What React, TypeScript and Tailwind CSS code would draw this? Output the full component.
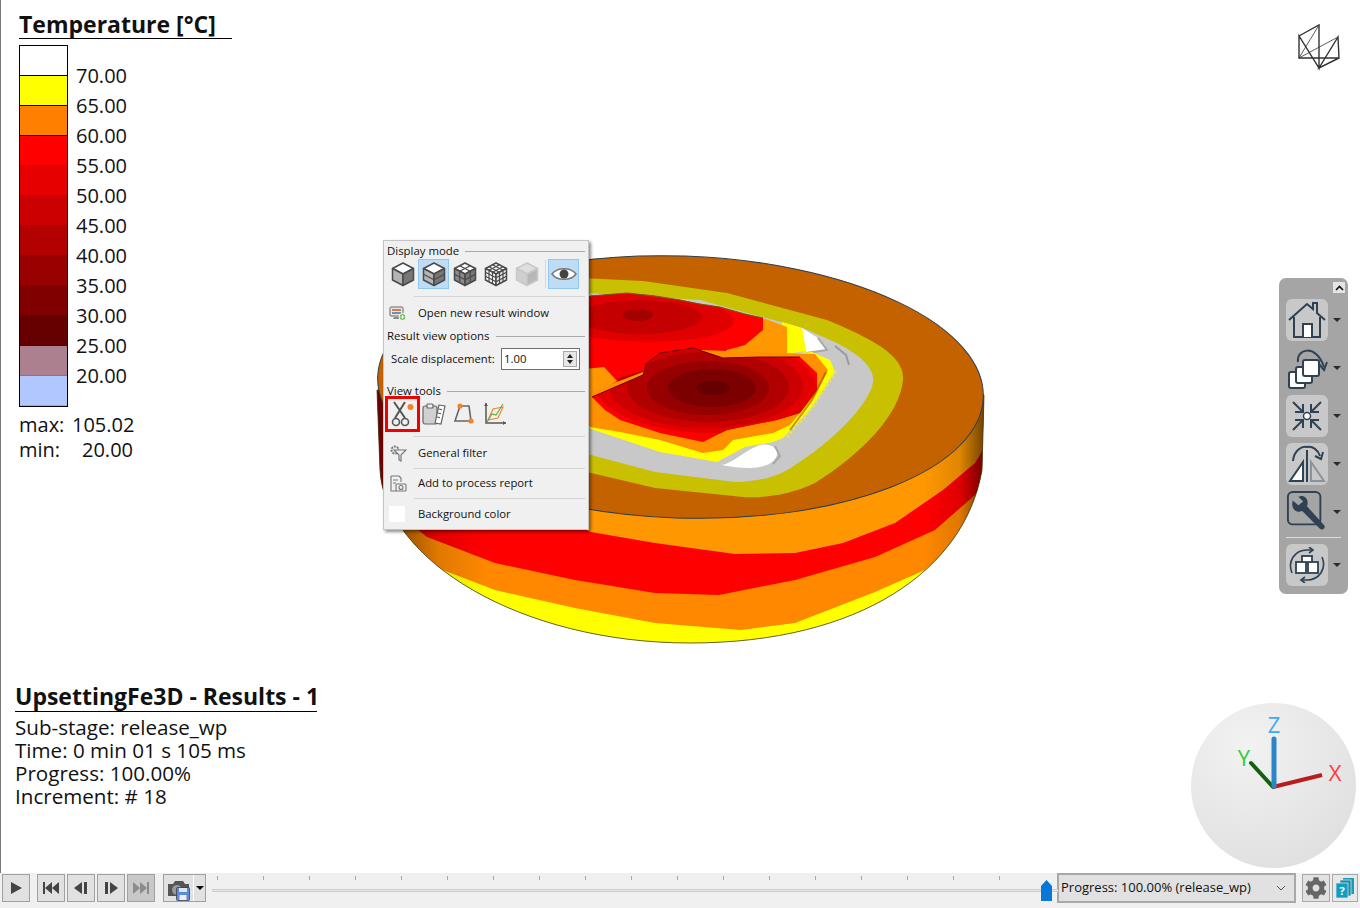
import { FaCog } from 'react-icons/fa';

const bands = ['#ffffff', '#ffff00', '#ff8000', '#ff0000', '#e60000', '#cc0000', '#b30000', '#990000', '#800000', '#660000', '#ad8090', '#b0c8ff'];
const labels = ['70.00', '65.00', '60.00', '55.00', '50.00', '45.00', '40.00', '35.00', '30.00', '25.00', '20.00'];
const ticks = [217, 263, 309, 355, 401, 447, 493, 539, 585, 631, 677, 723, 769, 815, 861, 907, 953, 999];

function Model() {
    const silhouette = 'M377 390 L380 470 C385 560 520 643 690 643 C860 643 965 570 982 470 L984 395 Z';
    return (
        <svg className="absolute left-0 top-0" width="1360" height="873" viewBox="0 0 1360 873">
            <defs>
                <clipPath id="body">
                    <path d={silhouette} />
                </clipPath>
                <clipPath id="front">
                    <path d="M592 397 L605 410 L620 420 L660 433 L703 442 L727 430 L777 420 L800 413 L817 390 L817 373 L800 357 L760 357 L723 358 L693 348 L660 353 L647 363 L643 375 Z" />
                </clipPath>
                <clipPath id="back">
                    <path d="M560 300 L590 296 L627 293 L655 296 L680 300 L700 304 L720 307 L745 314 L763 318 L763 330 L745 345 L727 350 L720 358 L693 348 L660 353 L647 363 L643 375 L625 378 L600 392 L560 400 Z" />
                </clipPath>
                <linearGradient id="side" x1="377" x2="984" y1="0" y2="0" gradientUnits="userSpaceOnUse">
                    <stop offset="0" stopColor="#000" stopOpacity="0.6" />
                    <stop offset="0.1" stopColor="#000" stopOpacity="0.12" />
                    <stop offset="0.18" stopColor="#000" stopOpacity="0" />
                    <stop offset="0.9" stopColor="#000" stopOpacity="0" />
                    <stop offset="0.96" stopColor="#000" stopOpacity="0.12" />
                    <stop offset="1" stopColor="#000" stopOpacity="0.55" />
                </linearGradient>
                <radialGradient id="ball" cx="0.35" cy="0.25" r="0.8">
                    <stop offset="0" stopColor="#f2f2f2" />
                    <stop offset="1" stopColor="#e0e0e0" />
                </radialGradient>
            </defs>

            {/* side of the billet */}
            <g clipPath="url(#body)">
                <rect x="370" y="380" width="620" height="270" fill="#ffff00" />
                <path d="M370 300 L370 500 L395 525 L403 533 L435 567 L495 590 L575 608 L655 623 L741 630 L795 623 L875 592 L925 570 L958 540 L980 500 L995 470 L995 300 Z" fill="#ff8800" />
                <path d="M370 300 L370 490 L400 515 L427 537 L495 563 L575 580 L655 593 L719 595 L795 580 L875 557 L935 530 L975 495 L995 465 L995 300 Z" fill="#ff0000" />
                <path d="M560 300 L560 520 L591 532 L655 543 L735 554 L795 553 L843 543 L895 523 L943 490 L975 463 L995 430 L995 300 Z" fill="#ff9800" />
                <rect x="370" y="380" width="620" height="270" fill="url(#side)" />
            </g>
            <path d={silhouette} fill="none" stroke="#3a3a20" strokeWidth="0.8" />

            {/* top face */}
            <ellipse cx="680.5" cy="387" rx="303" ry="131" transform="rotate(2 680.5 387)" fill="#c46200" stroke="#2c3e50" strokeWidth="1" />
            <path d="M540 276 L643 281 L727 293 L827 320 C870 338 905 355 903 380 C900 415 860 455 815 483 C790 495 765 498 743 497 L655 488 L591 473 L540 460 Z" fill="#c8c000" />
            <path d="M540 290 L700 300 L803 328 L837 343 C860 355 875 368 873 382 C870 405 830 443 795 465 C780 476 760 482 735 482 L655 472 L591 455 L540 440 Z" fill="#c8c8c8" />

            {/* rear bulge */}
            <path d="M802 328 L818 338 L827 350 L806 353 Z" fill="#ffffff" />
            <path d="M782 322 L802 328 L806 351 L786 354 Z" fill="#ffff00" />
            <path d="M763 318 L787 327 L787 354 L720 358 L733 345 L760 333 Z" fill="#ff9800" />
            <path d="M818 338 L827 350 L806 353" fill="none" stroke="#a8a8a8" strokeWidth="2" />
            <path d="M835 346 L846 355 L849 365" fill="none" stroke="#9a9a9a" strokeWidth="2" />
            <g clipPath="url(#back)">
                <rect x="555" y="285" width="220" height="120" fill="#ff0000" />
                <ellipse cx="630" cy="316" rx="104" ry="25" transform="rotate(3 630 316)" fill="#e00000" />
                <ellipse cx="640" cy="317" rx="62" ry="17" fill="#c40000" />
                <ellipse cx="638" cy="315" rx="15" ry="6" fill="#a30000" />
            </g>
            <path d="M590 296 L627 293 L655 296 L680 300 L700 304 L720 307 L745 314 L763 318" fill="none" stroke="#7a5a00" strokeWidth="1" />
            <path d="M575 370 L604 367 L617 381 L600 392 L575 398 Z" fill="#ff9800" />
            <path d="M618 380 L645 372 L647 363" fill="none" stroke="#b00000" strokeWidth="3" />

            {/* front bulge */}
            <path d="M570 410 L588 428 L660 452 L717 462 L745 447 L773 442 L783 438 L810 410 L835 372 L830 360 L812 352 L760 356 L600 392 Z" fill="#ffff00" />
            <path d="M570 400 L590 427 L620 432 L660 440 L703 453 L723 450 L733 440 L773 433 L790 425 L815 395 L828 370 L815 354 L700 350 Z" fill="#ff9000" />
            <path d="M836 371 L812 408 L787 437" fill="none" stroke="#e8e060" strokeWidth="3" strokeDasharray="3 2" />
            <path d="M790 430 L812 400 L826 372" fill="none" stroke="#a05000" strokeWidth="2" opacity="0.6" />
            <path d="M722 465 C735 462 745 450 760 445 C768 443 775 446 777 452 C778 462 765 468 750 468 C740 468 730 467 722 465 Z" fill="#ffffff" />
            <path d="M775 446 L780 456 L773 464" fill="none" stroke="#a8a8a8" strokeWidth="2" />
            <g clipPath="url(#front)">
                <rect x="585" y="340" width="240" height="110" fill="#ff0000" />
                <ellipse cx="705" cy="385" rx="112" ry="48" transform="rotate(2 705 385)" fill="#e40000" />
                <ellipse cx="706" cy="386" rx="97" ry="42" fill="#cc0000" />
                <ellipse cx="708" cy="387" rx="81" ry="35" fill="#b00000" />
                <ellipse cx="708" cy="388" rx="61" ry="27" fill="#960000" />
                <ellipse cx="712" cy="388" rx="44" ry="19" fill="#7d0000" />
                <ellipse cx="713" cy="388" rx="17" ry="7" fill="#660000" />
            </g>
            <path d="M592 397 L643 375 L647 363 L660 353 L693 348 L723 358 L760 357 L800 357" fill="none" stroke="#7a0000" strokeWidth="1" />

            {/* logo */}
            <g fill="none" stroke="#333" strokeWidth="1.4">
                <path d="M1299 36 L1319 25 L1319 68 L1299 36 L1299 58 L1339 58 L1338 37 L1319 68 L1339 58" />
                <path d="M1299 58 L1319 25 M1299 58 L1338 37" strokeWidth="0.8" />
            </g>

            {/* axis ball */}
            <circle cx="1273.5" cy="785.5" r="82.5" fill="url(#ball)" />
            <path d="M1273 787 L1251 763" stroke="#14600f" strokeWidth="4" strokeLinecap="round" />
            <path d="M1273 787 L1322 775" stroke="#b81c1c" strokeWidth="4" />
            <path d="M1274 786 L1274 739" stroke="#2b86c5" strokeWidth="5" strokeLinecap="round" />
            <text x="1274" y="733" textAnchor="middle" fontSize="22" fill="#3fa9f5" fontFamily="'Open Sans', sans-serif">Z</text>
            <text x="1244" y="766" textAnchor="middle" fontSize="22" fill="#2ecc40" fontFamily="'Open Sans', sans-serif">Y</text>
            <text x="1335" y="781" textAnchor="middle" fontSize="22" fill="#ff3b3b" fontFamily="'Open Sans', sans-serif">X</text>
        </svg>
    );
}

function Cube({ h = 0, v = 0, light = false, faded = false }: { h?: number; v?: number; light?: boolean; faded?: boolean }) {
    const line = faded ? '#c8c8c8' : '#4a4a4a';
    const left = faded ? '#cfcfcf' : light ? '#ffffff' : h && v ? '#8a8a8a' : '#b4b4b4';
    const right = faded ? '#b8b8b8' : light ? '#e8e8e8' : '#777777';
    const top = faded ? '#dedede' : '#ffffff';
    const hs = Array.from({ length: h }, (_, i) => (i + 1) / (h + 1));
    const vs = Array.from({ length: v }, (_, i) => (i + 1) / (v + 1));
    return (
        <svg width="24" height="26" viewBox="0 0 24 26" fill="none" stroke={line} strokeWidth="1.5" strokeLinejoin="round">
            <path d="M12 2 L22.5 7.5 L12 13 L1.5 7.5 Z" fill={top} />
            <path d="M1.5 7.5 L12 13 L12 24.5 L1.5 19 Z" fill={left} />
            <path d="M22.5 7.5 L12 13 L12 24.5 L22.5 19 Z" fill={right} />
            {hs.map((t) => (
                <path key={t} d={`M1.5 ${7.5 + 11.5 * t} L12 ${13 + 11.5 * t} L22.5 ${7.5 + 11.5 * t}`} strokeWidth="1.2" />
            ))}
            {vs.map((t) => (
                <path key={t} d={`M${1.5 + 10.5 * t} ${7.5 + 5.5 * t} l0 11.5 M${22.5 - 10.5 * t} ${7.5 + 5.5 * t} l0 11.5 M${1.5 + 10.5 * t} ${7.5 + 5.5 * t} L${12 + 10.5 * t} ${2 + 5.5 * t} M${22.5 - 10.5 * t} ${7.5 + 5.5 * t} L${12 - 10.5 * t} ${2 + 5.5 * t}`} strokeWidth="1.2" />
            ))}
        </svg>
    );
}

function SectionTitle({ title }: { title: string }) {
    return (
        <div className="flex items-center gap-[6px] h-[16px] pl-[3px] pr-[3px]">
            <span className="text-[11.4px] leading-[16px] text-[#111]">{title}</span>
            <div className="flex-1 h-px bg-[#a8a8a8]" />
        </div>
    );
}

function Divider() {
    return <div className="h-px ml-[30px] mr-[3px] bg-[#d4d4d4]" />;
}

function MenuRow({ icon, text }: { icon: React.ReactNode; text: string }) {
    return (
        <div className="flex items-center h-[30px]">
            <div className="w-[34px] pl-[5px] flex items-center">{icon}</div>
            <span className="text-[11.3px] text-[#111] whitespace-nowrap">{text}</span>
        </div>
    );
}

function ResultPopup() {
    return (
        <div className="absolute left-[383px] top-[240px] w-[206px] h-[290px] bg-[#f0f0f0] border border-[#c4c4c4] shadow-[2px_2px_3px_rgba(0,0,0,0.45)] pt-[2px] flex flex-col font-['Open_Sans',sans-serif]">
            <SectionTitle title="Display mode" />
            <div className="flex items-center h-[30px] pl-[3px]">
                <div className="w-[31px] h-[30px] flex items-center justify-center"><Cube /></div>
                <div className="w-[31px] h-[30px] flex items-center justify-center bg-[#bfdcf5] border border-[#90c8f5]"><Cube h={1} /></div>
                <div className="w-[31px] h-[30px] flex items-center justify-center"><Cube h={1} v={1} /></div>
                <div className="w-[31px] h-[30px] flex items-center justify-center"><Cube h={2} v={2} light /></div>
                <div className="w-[31px] h-[30px] flex items-center justify-center"><Cube faded /></div>
                <div className="w-px h-[28px] ml-[3px] mr-[2px] bg-[#d8d8d8]" />
                <div className="w-[31px] h-[30px] flex items-center justify-center bg-[#bfdcf5] border border-[#90c8f5]">
                    <svg width="26" height="16" viewBox="0 0 26 16">
                        <path d="M1 8 C6 1 20 1 25 8 C20 15 6 15 1 8 Z" fill="#fff" stroke="#777" strokeWidth="1.5" />
                        <circle cx="13" cy="8" r="4.5" fill="#444" />
                    </svg>
                </div>
            </div>
            <div className="h-[7px]" />
            <Divider />
            <div className="h-[2px]" />
            <MenuRow
                text="Open new result window"
                icon={
                    <svg width="18" height="16" viewBox="0 0 18 16">
                        <rect x="1" y="1" width="13" height="9" rx="1" fill="#e8e8e8" stroke="#666" />
                        <rect x="3" y="3" width="9" height="2" fill="#e07a30" />
                        <rect x="3" y="6" width="9" height="2" fill="#6a8ec8" />
                        <path d="M5 11 L10 11 L11 13 L4 13 Z" fill="#888" />
                        <circle cx="13.5" cy="11" r="3.5" fill="#6cc04a" stroke="#fff" />
                        <path d="M11.5 11 H15.5 M13.5 9 V13" stroke="#fff" strokeWidth="1" />
                    </svg>
                }
            />
            <SectionTitle title="Result view options" />
            <div className="flex items-center h-[22px] mt-[4px] pl-[7px]">
                <span className="text-[11.3px] text-[#111] w-[110px] whitespace-nowrap">Scale displacement:</span>
                <div className="w-[79px] h-[22px] border border-[#6e6e6e] bg-white flex items-center justify-between pl-[2px] pr-[2px]">
                    <span className="text-[11.3px] text-[#111]">1.00</span>
                    <div className="w-[14px] h-[16px] border border-[#a8a8a8] bg-[#e6e6e6] flex flex-col items-center justify-center gap-[2px]">
                        <div className="w-0 h-0 border-x-[3px] border-x-transparent border-b-[4px] border-b-[#222]" />
                        <div className="w-0 h-0 border-x-[3px] border-x-transparent border-t-[4px] border-t-[#222]" />
                    </div>
                </div>
            </div>
            <div className="mt-[13px]"><SectionTitle title="View tools" /></div>
            <div className="flex items-center h-[36px] pl-[1px] -mt-[3px]">
                <div className="w-[35px] h-[36px] border-[3px] border-[#f00000] flex items-center justify-center">
                    <svg width="26" height="28" viewBox="0 0 26 28" fill="none" stroke="#555" strokeWidth="1.6">
                        <path d="M4 2 L15 18 M15 2 L5 18" strokeWidth="2" />
                        <circle cx="6" cy="22" r="3.5" />
                        <circle cx="15" cy="22" r="3.5" />
                        <circle cx="20.5" cy="7" r="3" fill="#f58220" stroke="none" />
                    </svg>
                </div>
                <div className="w-[27px] flex justify-center">
                    <svg width="24" height="24" viewBox="0 0 24 24" stroke="#666" strokeWidth="1.2">
                        <rect x="1" y="4" width="14" height="18" rx="2" fill="#d0d0d0" />
                        <rect x="5" y="2" width="6" height="4" rx="1" fill="#eee" />
                        <path d="M17 3 L23 4 L19 22 L13 21 Z" fill="#fff" />
                        <path d="M17 7 l3 .6 M16 11 l3 .6 M15 15 l3 .6" />
                    </svg>
                </div>
                <div className="w-[34px] flex justify-center">
                    <svg width="22" height="22" viewBox="0 0 22 22" fill="none" stroke="#666" strokeWidth="1.6">
                        <path d="M7 3 L16 3 L18 18 L2 18 Z" />
                        <circle cx="7" cy="3" r="2.6" fill="#f58220" stroke="none" />
                        <circle cx="18" cy="18" r="2.6" fill="#f58220" stroke="none" />
                    </svg>
                </div>
                <div className="w-[28px] flex justify-center">
                    <svg width="24" height="24" viewBox="0 0 24 24" fill="none" strokeWidth="1.1">
                        <path d="M3 1 V21 H23" stroke="#555" strokeWidth="1.5" />
                        <path d="M3 1 l-2 3 h4 Z M23 21 l-3 -2 v4 Z" fill="#555" stroke="none" />
                        <path d="M5 18 L10 7 L20 5 L15 16 Z" stroke="#f58220" />
                        <path d="M4 20 L9 12 L13 13 L20 2" stroke="#5faa4a" />
                    </svg>
                </div>
            </div>
            <div className="h-[4px]" />
            <Divider />
            <div className="h-[1px]" />
            <MenuRow
                text="General filter"
                icon={
                    <svg width="18" height="18" viewBox="0 0 18 18" fill="none" stroke="#777" strokeWidth="1.2">
                        <circle cx="6" cy="6" r="3.5" strokeDasharray="2 1" strokeWidth="2" />
                        <path d="M5 6 H17 L12 11 V17 L10 16 V11 Z" fill="#f0f0f0" />
                    </svg>
                }
            />
            <Divider />
            <MenuRow
                text="Add to process report"
                icon={
                    <svg width="18" height="18" viewBox="0 0 18 18" fill="none" stroke="#777" strokeWidth="1.1">
                        <path d="M2 1 H10 L12 3 V7 M2 1 V16 H7" />
                        <path d="M4 5 H9 M4 8 H7" />
                        <rect x="7" y="9" width="10" height="7" rx="1" fill="#f0f0f0" />
                        <circle cx="12" cy="12.5" r="2" />
                    </svg>
                }
            />
            <Divider />
            <MenuRow text="Background color" icon={<div className="w-[16px] h-[16px] bg-white" />} />
        </div>
    );
}

function ToolButton({ children, plain = false }: { children: React.ReactNode; plain?: boolean }) {
    return (
        <div className="flex items-center">
            <div className={`w-[42px] h-[42px] flex items-center justify-center rounded-[6px] ${plain ? '' : 'bg-[#c8c8c8]'}`}>
                {children}
            </div>
            <div className="ml-[5px] w-0 h-0 border-x-[4px] border-x-transparent border-t-[4px] border-t-[#2c2c2c]" />
        </div>
    );
}

function ViewToolbar() {
    return (
        <div className="absolute left-[1279px] top-[278px] w-[69px] h-[316px] bg-[#a5a5a5] rounded-[7px] pl-[7px] pt-[4px] flex flex-col">
            <div className="self-end mr-[3px] w-[12px] h-[11px] bg-[#e4e4e4] flex items-center justify-center">
                <svg width="9" height="6" viewBox="0 0 9 6" fill="none" stroke="#111" strokeWidth="1.6"><path d="M1 5 L4.5 1.5 L8 5" /></svg>
            </div>
            <div className="mt-[6px] flex flex-col gap-[6px]">
                <ToolButton>
                    <svg width="38" height="38" viewBox="0 0 38 38" fill="none" stroke="#2f4152" strokeWidth="2">
                        <path d="M1 19 L19 3 L25 8 V2 H29 V12 L37 19" />
                        <path d="M6 16 V36 H32 V16" />
                        <path d="M15 36 V23 H24 V36" fill="#fff" />
                    </svg>
                </ToolButton>
                <ToolButton plain>
                    <svg width="42" height="42" viewBox="0 0 42 42" strokeWidth="2" stroke="#2f4152" fill="#fff">
                        <path d="M12 15 C10 2 30 -4 38 20" fill="none" />
                        <path d="M33 17 L38 23 L41 15" fill="none" />
                        <rect x="3" y="25" width="16" height="16" rx="2" />
                        <rect x="10" y="20" width="16" height="16" rx="2" />
                        <rect x="17" y="13" width="16" height="16" rx="2" />
                    </svg>
                </ToolButton>
                <ToolButton>
                    <svg width="36" height="36" viewBox="0 0 36 36" fill="none" stroke="#2f4152" strokeWidth="2">
                        <path d="M4 4 L14 14 M14 6 V14 H6 M32 4 L22 14 M22 6 V14 H30 M4 32 L14 22 M14 30 V22 H6 M32 32 L22 22 M22 30 V22 H30" />
                        <circle cx="18" cy="18" r="3.5" fill="#fff" strokeWidth="1.5" />
                    </svg>
                </ToolButton>
                <ToolButton>
                    <svg width="38" height="38" viewBox="0 0 38 38" fill="none" stroke="#2f4152" strokeWidth="2">
                        <path d="M19 5 V37" />
                        <path d="M5 16 C6 5 14 1 19 2 C25 1 30 5 32 11" />
                        <path d="M27 11 L33 14 L35 7" />
                        <path d="M15 17 V36 H2 Z" fill="#fff" />
                        <path d="M23 17 V36 H36 Z" stroke="#8a949c" />
                    </svg>
                </ToolButton>
                <ToolButton plain>
                    <svg width="44" height="44" viewBox="0 0 44 44" fill="none">
                        <rect x="2" y="1" width="34" height="34" rx="5" stroke="#2f4152" strokeWidth="2" />
                        <path d="M7 10 L13 15 L18 11 L13 6 C18 3 25 8 22 16 L40 36 C42 39 38 42 35 39 L17 21 C10 24 5 18 7 10 Z" fill="#2f4152" />
                    </svg>
                </ToolButton>
                <div className="w-[55px] h-px bg-[#dcdcdc] -mt-[2px]" />
                <ToolButton>
                    <svg width="36" height="36" viewBox="0 0 36 36" fill="none" stroke="#2f4152" strokeWidth="1.6">
                        <path d="M3 26 C-2 14 6 3 18 3 L24 3" />
                        <path d="M20 0 L24 3 L20 6" />
                        <path d="M33 10 C38 22 30 33 18 33 L12 33" />
                        <path d="M16 30 L12 33 L16 36" />
                        <g fill="#fff" strokeWidth="1.8">
                            <rect x="13" y="9" width="10" height="7" />
                            <rect x="7" y="15" width="10" height="11" />
                            <rect x="19" y="15" width="10" height="11" />
                        </g>
                    </svg>
                </ToolButton>
            </div>
        </div>
    );
}

function Transport({ children, disabled = false }: { children: React.ReactNode; disabled?: boolean }) {
    return (
        <div className={`w-[28px] h-[28px] border border-[#a0a0a0] flex items-center justify-center ${disabled ? 'bg-[#c8c8c8]' : 'bg-[#e1e1e1]'}`}>
            {children}
        </div>
    );
}

function TransportIcon({ d, color = '#444' }: { d: string; color?: string }) {
    return (
        <svg width="18" height="14" viewBox="0 0 18 14" fill={color}>
            <path d={d} />
        </svg>
    );
}

function BottomBar() {
    return (
        <div className="h-[35px] bg-[#f0f0f0] flex items-start font-['Open_Sans',sans-serif]">
            <div className="flex items-start pl-[2px] pt-[1px]">
                <Transport><TransportIcon d="M4 1 L15 7 L4 13 Z" /></Transport>
                <div className="w-[7px]" />
                <div className="flex gap-[2px]">
                    <Transport><TransportIcon d="M1 1 H3 V13 H1 Z M3 7 L10 1 V13 Z M10 7 L17 1 V13 Z" /></Transport>
                    <Transport><TransportIcon d="M2 7 L10 1 V13 Z M12 1 H15 V13 H12 Z" /></Transport>
                    <Transport><TransportIcon d="M3 1 H6 V13 H3 Z M8 1 L16 7 L8 13 Z" /></Transport>
                    <Transport disabled><TransportIcon color="#8c8c8c" d="M1 1 L8 7 L1 13 Z M8 1 L15 7 L8 13 Z M15 1 H17 V13 H15 Z" /></Transport>
                </div>
                <div className="w-[8px]" />
                <div className="w-[43px] h-[28px] border border-[#a0a0a0] bg-[#e1e1e1] flex items-center">
                    <div className="w-[30px] h-[26px] border-r border-white relative">
                        <svg className="absolute left-[3px] top-[3px]" width="26" height="24" viewBox="0 0 26 24">
                            <path d="M1 6 H6 L8 3 H16 L18 6 H22 V18 H1 Z" fill="#555" />
                            <circle cx="10" cy="12" r="5" fill="#9a9a9a" />
                            <rect x="9.5" y="9.5" width="13" height="13" rx="1" fill="#5d8cd6" stroke="#334" strokeWidth="0.7" />
                            <rect x="12" y="10" width="8" height="4" fill="#dde6f5" />
                            <rect x="12.5" y="17" width="7" height="5" fill="#eee" />
                        </svg>
                    </div>
                    <div className="flex-1 flex justify-center">
                        <div className="w-0 h-0 border-x-[4px] border-x-transparent border-t-[4px] border-t-black" />
                    </div>
                </div>
            </div>
            <div className="relative w-[846px] ml-[6px] h-[30px]">
                {ticks.map((x) => (
                    <div key={x} className="absolute top-[3px] w-px h-[4px] bg-[#a8a8a8]" style={{ left: x - 212 }} />
                ))}
                <div className="absolute left-0 right-0 top-[16px] h-[3px] bg-[#e6e6e6] border-y border-[#cdcdcd]" />
                <svg className="absolute left-[829px] top-[7px]" width="11" height="21" viewBox="0 0 11 21">
                    <path d="M5.5 0 L11 6 V21 H0 V6 Z" fill="#0878d6" />
                </svg>
            </div>
            <div className="w-[239px] h-[30px] ml-[-1px] border-2 border-[#a8a8a8] bg-[#e1e1e1] flex items-center justify-between pl-[2px] pr-[8px]">
                <span className="text-[13px] text-[#111] whitespace-nowrap">Progress: 100.00% (release_wp)</span>
                <svg width="10" height="6" viewBox="0 0 10 6" fill="none" stroke="#555" strokeWidth="1"><path d="M1 1 L5 5 L9 1" /></svg>
            </div>
            <div className="w-[28px] h-[28px] ml-[6px] mt-[1px] border border-[#a8a8a8] bg-[#e1e1e1] flex items-center justify-center">
                <FaCog size={22} color="#666" />
            </div>
            <div className="w-[26px] h-[28px] ml-[2px] mt-[1px] border border-[#a8a8a8] bg-[#e8e8e8] flex items-center justify-center">
                <svg width="20" height="22" viewBox="0 0 20 22">
                    <rect x="8" y="1" width="11" height="16" fill="#1c9bb8" />
                    <rect x="5" y="3" width="11" height="16" fill="#1490ac" stroke="#e8e8e8" strokeWidth="0.7" />
                    <rect x="1" y="6" width="12" height="15" fill="#0f9ec2" stroke="#e8e8e8" strokeWidth="0.7" />
                    <text x="7" y="18" textAnchor="middle" fontSize="11" fontWeight="700" fill="#fff" fontFamily="'Open Sans', sans-serif">?</text>
                </svg>
            </div>
        </div>
    );
}

export default function App() {
    return (
        <div className="w-[1360px] h-[908px] bg-white flex flex-col overflow-hidden font-['Open_Sans',sans-serif] text-[#111]">
            <div className="relative h-[873px] shadow-[inset_1px_0_0_#777]">
                <Model />

                <div className="absolute left-[19px] top-[11px] w-[213px]">
                    <div className="h-[28px] border-b border-black text-[23px] leading-[27px] font-bold whitespace-nowrap">Temperature [°C]</div>
                    <div className="flex mt-[6px]">
                        <div className="w-[49px] border border-black">
                            {bands.map((c, i) => (
                                <div key={c} className={`h-[30px] ${i < 3 ? 'border-b border-black' : 'border-b border-[#00000022]'}`} style={{ backgroundColor: c }} />
                            ))}
                        </div>
                        <div className="pt-[16px] pl-[8px]">
                            {labels.map((l) => (
                                <div key={l} className="h-[30px] leading-[30px] text-[20px]">{l}</div>
                            ))}
                        </div>
                    </div>
                    <div className="mt-[5px] grid grid-cols-[auto_61px] w-[114px] text-[20px] leading-[25px]">
                        <span>max:</span><span className="text-right">105.02</span>
                        <span>min:</span><span className="text-right">20.00</span>
                    </div>
                </div>

                <div className="absolute left-[15px] top-[683px]">
                    <div className="w-[302px] h-[29px] border-b border-black text-[23px] leading-[27px] font-bold whitespace-nowrap">UpsettingFe3D - Results - 1</div>
                    <div className="mt-[4px] text-[20.6px] leading-[23px] whitespace-nowrap">
                        <div>Sub-stage: release_wp</div>
                        <div>Time: 0 min 01 s 105 ms</div>
                        <div>Progress: 100.00%</div>
                        <div>Increment: # 18</div>
                    </div>
                </div>

                <ResultPopup />
                <ViewToolbar />
            </div>
            <BottomBar />
        </div>
    );
}
